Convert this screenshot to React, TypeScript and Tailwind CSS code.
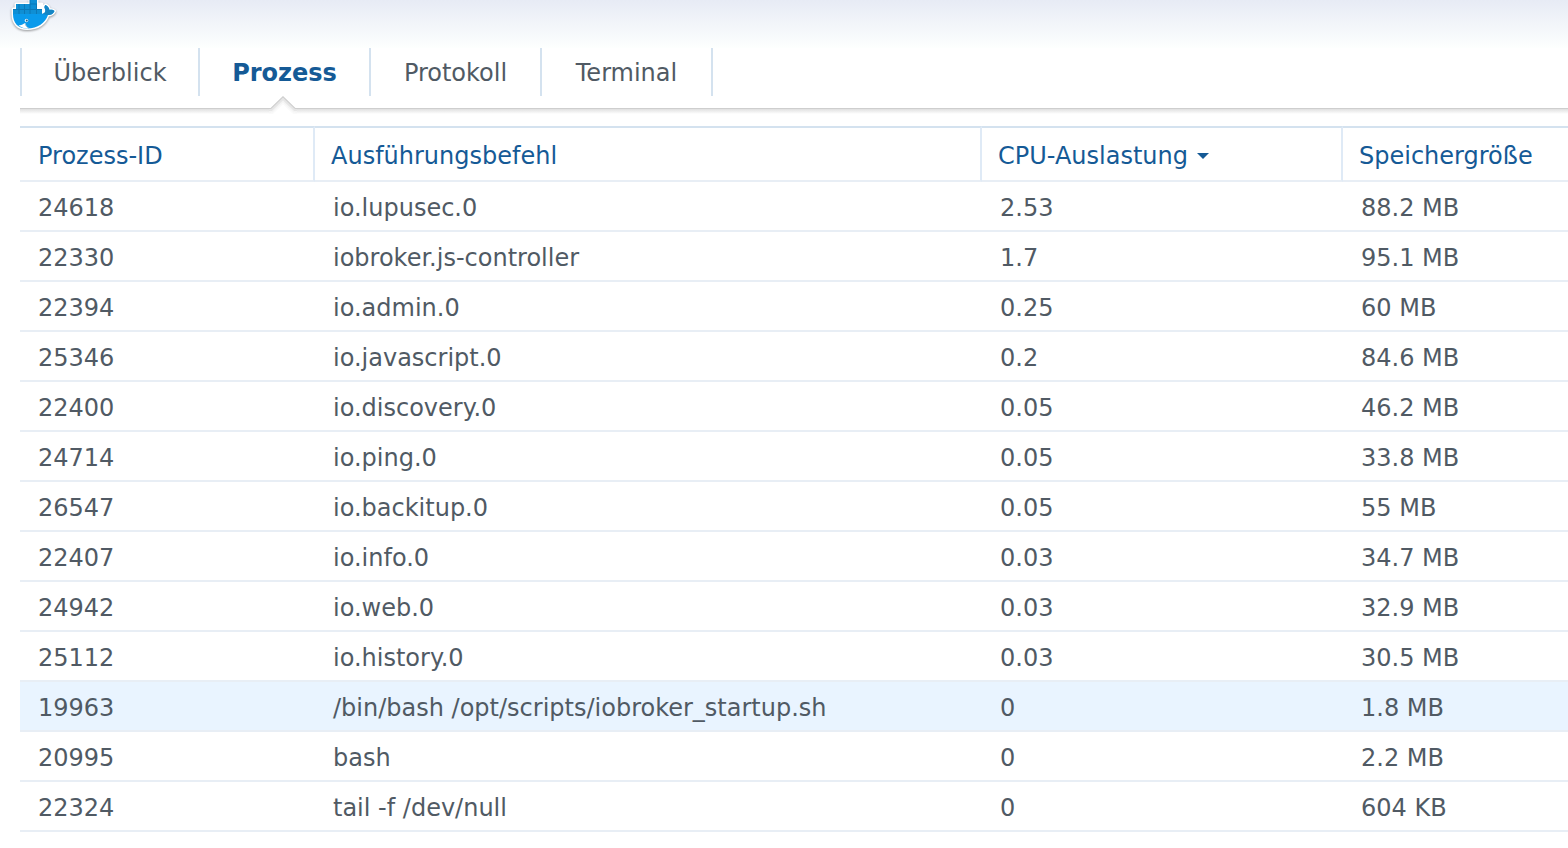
import { useState } from 'react';

interface Process {
  pid: string;
  command: string;
  cpu: string;
  memory: string;
}

const tabs = [
  { id: 'overview', label: 'Überblick', width: 'w-[178px]' },
  { id: 'process', label: 'Prozess', width: 'w-[171px]' },
  { id: 'log', label: 'Protokoll', width: 'w-[171px]' },
  { id: 'terminal', label: 'Terminal', width: 'w-[171px]' },
];

const processes: Process[] = [
  { pid: '24618', command: 'io.lupusec.0', cpu: '2.53', memory: '88.2 MB' },
  { pid: '22330', command: 'iobroker.js-controller', cpu: '1.7', memory: '95.1 MB' },
  { pid: '22394', command: 'io.admin.0', cpu: '0.25', memory: '60 MB' },
  { pid: '25346', command: 'io.javascript.0', cpu: '0.2', memory: '84.6 MB' },
  { pid: '22400', command: 'io.discovery.0', cpu: '0.05', memory: '46.2 MB' },
  { pid: '24714', command: 'io.ping.0', cpu: '0.05', memory: '33.8 MB' },
  { pid: '26547', command: 'io.backitup.0', cpu: '0.05', memory: '55 MB' },
  { pid: '22407', command: 'io.info.0', cpu: '0.03', memory: '34.7 MB' },
  { pid: '24942', command: 'io.web.0', cpu: '0.03', memory: '32.9 MB' },
  { pid: '25112', command: 'io.history.0', cpu: '0.03', memory: '30.5 MB' },
  { pid: '19963', command: '/bin/bash /opt/scripts/iobroker_startup.sh', cpu: '0', memory: '1.8 MB' },
  { pid: '20995', command: 'bash', cpu: '0', memory: '2.2 MB' },
  { pid: '22324', command: 'tail -f /dev/null', cpu: '0', memory: '604 KB' },
];

function DockerIcon() {
  return (
    <svg width="52" height="34" viewBox="0 0 52 34" className="block drop-shadow-[0_1px_1px_rgba(0,0,0,0.4)]" aria-hidden="true">
      {/* white outline behind the whale */}
      <path
        d="M5 14V9H8V4H22V-2H29V4H34V9H35V13C37 12 37.500 11 37 9C36 7 36.500 6 37.500 5C40 6 41 8 41.500 10C43 9.500 45 9.500 46.500 11C45 14 43 15 40 15C37 23 30 28.500 19 28.500C10 28.500 5 23 5 14Z"
        fill="#ffffff"
        stroke="#ffffff"
        strokeWidth="3"
        strokeLinejoin="round"
      />
      <path d="M5 9H34V14.500H5ZM8 4H29V9.500H8ZM22 -2H29V4.500H22Z" fill="#0f8fd4" />
      <path d="M11 4V14M16.500 4V14M22 0V14M28.500 4V14M5 9.500H34M22 4H29M5 14.500H34" stroke="#0b79b8" strokeWidth="1" fill="none" />
      <path
        d="M5 14H34C37 13.500 38 11.500 37 9C36 7 36.500 6 37.500 5C40 6 41 8 41.500 10C43 9.500 45 9.500 46.500 11C45 14 43 15 40 15C37 23 30 28.500 19 28.500C10 28.500 5 23 5 14Z"
        fill="#0a9aeb"
      />
      <path d="M34 14C37 13.500 38 11.500 37 9C36 7 36.500 6 37.500 5C40 6 41 8 41.500 10C43 9.500 45 9.500 46.500 11C45 14 43 15 40 15Z" fill="#1585c4" />
      <path d="M10.500 25C13 25.500 15 24.500 17 23C17.500 25.500 18.500 27 21 28.500C16 29 13 27.500 10.500 25Z" fill="#ffffff" />
      <path d="M17 23C17.500 25.500 18.500 27 21 28.500" stroke="#9cc4dc" strokeWidth="1" fill="none" />
      <circle cx="18.500" cy="20.500" r="1.800" fill="#d8effc" />
      <circle cx="18.800" cy="20.500" r="0.900" fill="#245a7c" />
    </svg>
  );
}

function TabPointer() {
  return (
    <svg width="28" height="18" viewBox="0 0 28 18" className="absolute left-[69px] top-12" aria-hidden="true">
      <path d="M2 12L14 0L26 12V18H2Z" fill="#ffffff" />
      <path d="M0 17.500H3L14 7L25 17.500H28" stroke="#fafafa" strokeWidth="2" fill="none" />
      <path d="M0 15.500H3L14 5L25 15.500H28" stroke="#f4f4f4" strokeWidth="2" fill="none" />
      <path d="M0 14H2.500L14 3L25.500 14H28" stroke="#e6e6e6" strokeWidth="2" fill="none" />
      <path d="M0 12.500H2L14 0.800L26 12.500H28" stroke="#cecece" strokeWidth="1.200" fill="none" />
    </svg>
  );
}

export default function App() {
  const [activeTab, setActiveTab] = useState('process');
  const [selected, setSelected] = useState('19963');

  return (
    <div className="min-h-screen overflow-hidden bg-white font-['DejaVu_Sans',sans-serif] text-2xl text-[#505a64]">
      <header className="h-12 overflow-hidden bg-linear-to-b from-[#e7ebf5] to-[#fdfffe] pl-2">
        <DockerIcon />
      </header>

      <nav className="ml-5">
        <div className="flex h-[60px] items-start" role="tablist">
          <div className="h-12 w-[2px] bg-[#d4e2ef]"></div>
          {tabs.map((tab) => (
            <button
              key={tab.id}
              type="button"
              role="tab"
              aria-selected={activeTab === tab.id}
              onClick={() => setActiveTab(tab.id)}
              className={`relative ${tab.width} h-12 shrink-0 border-r-2 border-[#d4e2ef] pt-[2px] text-center ${
                activeTab === tab.id ? 'font-bold text-[#155a96]' : ''
              }`}
            >
              {tab.label}
              {activeTab === tab.id && <TabPointer />}
            </button>
          ))}
        </div>
        <div className="h-[6px] border-t border-[#cecece] bg-linear-to-b from-[#e0e0e0] to-white"></div>
      </nav>

      <main className="ml-5 mt-3">
        <table className="w-full table-fixed border-separate border-spacing-0 text-left whitespace-nowrap">
          <colgroup>
            <col className="w-[295px]" />
            <col className="w-[667px]" />
            <col className="w-[361px]" />
            <col />
          </colgroup>
          <thead className="text-[#155a96]">
            <tr className="h-14">
              <th className="border-y-2 border-r-2 border-t-[#d4e2ef] border-r-[#dfeaf6] border-b-[#e8eef5] pt-1 pl-[18px] font-normal">Prozess-ID</th>
              <th className="border-y-2 border-r-2 border-t-[#d4e2ef] border-r-[#dfeaf6] border-b-[#e8eef5] pt-1 pl-4 font-normal">Ausführungsbefehl</th>
              <th className="border-y-2 border-r-2 border-t-[#d4e2ef] border-r-[#dfeaf6] border-b-[#e8eef5] pt-1 pl-4 font-normal" aria-sort="descending">
                <div className="flex items-center gap-2">
                  CPU-Auslastung
                  <svg width="14" height="6" viewBox="0 0 14 6" aria-hidden="true">
                    <path d="M1 0H13L7 6Z" fill="#155a96" />
                  </svg>
                </div>
              </th>
              <th className="border-y-2 border-t-[#d4e2ef] border-b-[#e8eef5] pt-1 pl-4 font-normal">Speichergröße</th>
            </tr>
          </thead>
          <tbody>
            {processes.map((process) => (
              <tr
                key={process.pid}
                onClick={() => setSelected(process.pid)}
                className={`h-[50px] ${selected === process.pid ? 'bg-[#e9f4ff]' : ''}`}
              >
                <td className="border-b-2 border-[#e8eef5] pt-1 pl-[18px]">{process.pid}</td>
                <td className="border-b-2 border-[#e8eef5] pt-1 pl-[18px]">{process.command}</td>
                <td className="border-b-2 border-[#e8eef5] pt-1 pl-[18px]">{process.cpu}</td>
                <td className="border-b-2 border-[#e8eef5] pt-1 pl-[18px]">{process.memory}</td>
              </tr>
            ))}
          </tbody>
        </table>
      </main>
    </div>
  );
}
